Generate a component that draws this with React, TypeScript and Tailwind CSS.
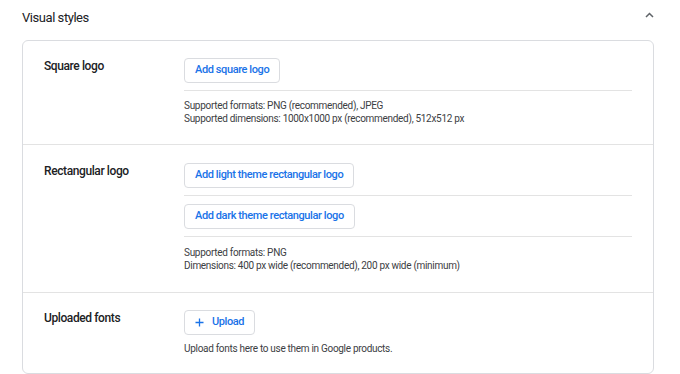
import React from "react";

const font = { fontFamily: "Roboto, 'Noto Sans', Arial, sans-serif" };

function OutlineButton({ children }: { children: React.ReactNode }) {
  return (
    <button className="h-[25px] px-[10px] border border-[#dadce0] rounded-[4px] bg-white text-[#1a73e8] text-[11px] tracking-[-0.4px] font-medium flex items-center gap-[8px] self-start">
      {children}
    </button>
  );
}

function Row({
  label,
  children,
  className,
}: {
  label: string;
  children: React.ReactNode;
  className: string;
}) {
  return (
    <div className={`flex px-[21px] ${className}`}>
      <div className="w-[140px] shrink-0 text-[12px] leading-[16px] tracking-[-0.4px] font-medium text-[#202124]">
        {label}
      </div>
      <div className="flex-1 flex flex-col">{children}</div>
    </div>
  );
}

function Note({ lines }: { lines: string[] }) {
  return (
    <div className="text-[10px] leading-[13px] tracking-[-0.3px] text-[#3c4043]">
      {lines.map((l) => (
        <div key={l}>{l}</div>
      ))}
    </div>
  );
}

function Divider({ className }: { className: string }) {
  return <div className={`h-px bg-[#e3e3e3] ${className}`} />;
}

export default function App() {
  return (
    <div className="w-[680px] h-[374px] bg-white overflow-hidden" style={font}>
      <div className="flex items-center justify-between pl-[22px] pr-[26px] h-[36px]">
        <h2 className="text-[13px] tracking-[-0.45px] text-[#202124]">Visual styles</h2>
        <svg width="9" height="6" viewBox="0 0 9 6" className="-mt-[6px]">
          <polyline points="1,5 4.5,1.5 8,5" fill="none" stroke="#5f6368" strokeWidth="1.5" />
        </svg>
      </div>
      <div className="ml-[22px] mt-[4px] w-[632px] border border-[#dadce0] rounded-[6px]">
        <Row label="Square logo" className="pt-[17px] pb-[19px] border-b border-[#e3e3e3]">
          <OutlineButton>Add square logo</OutlineButton>
          <Divider className="mt-[7px] mb-[8px]" />
          <Note
            lines={[
              "Supported formats: PNG (recommended), JPEG",
              "Supported dimensions: 1000x1000 px (recommended), 512x512 px",
            ]}
          />
        </Row>
        <Row label="Rectangular logo" className="pt-[18px] pb-[20px] border-b border-[#e3e3e3]">
          <OutlineButton>Add light theme rectangular logo</OutlineButton>
          <Divider className="mt-[7px] mb-[8px]" />
          <OutlineButton>Add dark theme rectangular logo</OutlineButton>
          <Divider className="mt-[7px] mb-[9px]" />
          <Note
            lines={[
              "Supported formats: PNG",
              "Dimensions: 400 px wide (recommended), 200 px wide (minimum)",
            ]}
          />
        </Row>
        <Row label="Uploaded fonts" className="pt-[17px] pb-[18px]">
          <OutlineButton>
            <svg width="9" height="9" viewBox="0 0 9 9">
              <path d="M4.5 0.5v8M0.5 4.5h8" stroke="#1a73e8" strokeWidth="1.3" />
            </svg>
            Upload
          </OutlineButton>
          <div className="mt-[7px]">
            <Note lines={["Upload fonts here to use them in Google products."]} />
          </div>
        </Row>
      </div>
    </div>
  );
}
